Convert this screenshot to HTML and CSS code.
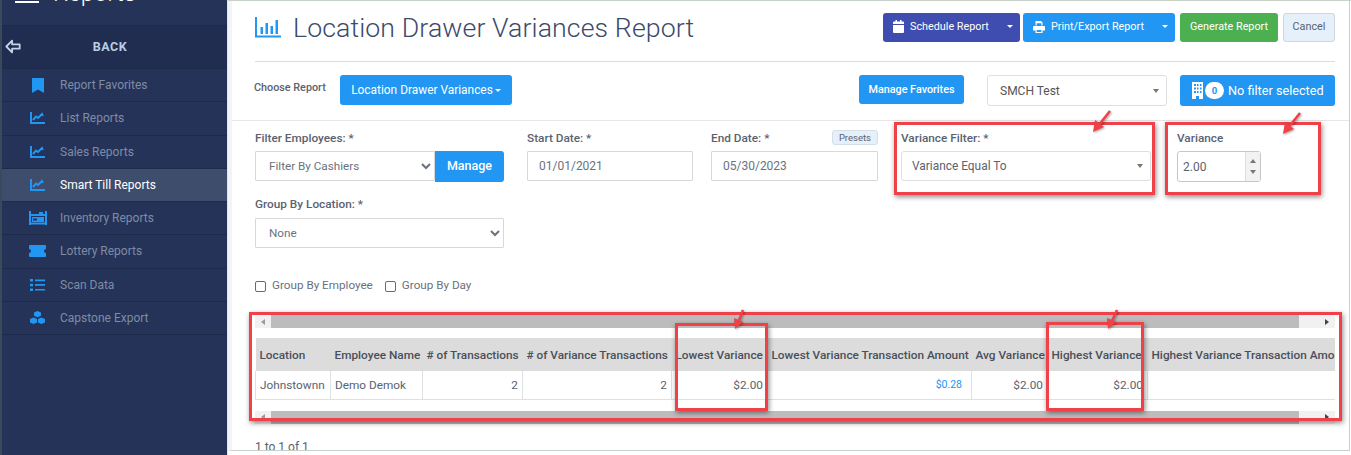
FILE: index.html
```html
<!DOCTYPE html>
<html lang="en">
<head>
<meta charset="utf-8">
<title>Location Drawer Variances Report</title>
<link rel="stylesheet" href="styles.css">
</head>
<body>
<div class="app">
  <aside class="sidebar">
    <div class="brand">
      <span class="brand-bar"></span>
      <span class="brand-text">Reports</span>
    </div>
    <div class="back">
      <svg class="back-icon" viewBox="0 0 18 16"><path d="M8 1.500 1.500 8 8 14.500V10.500h8.500v-5H8z" fill="none" stroke="#c5d3e6" stroke-width="2" stroke-linejoin="round"/></svg>
      <span>BACK</span>
    </div>
    <nav class="nav">
      <a class="nav-item"><span class="nav-icon"><svg width="12" height="15" viewBox="0 0 12 15"><path d="M0 0h12v15L6 11.500 0 15z" fill="#2196f3"/></svg></span>Report Favorites</a>
      <a class="nav-item"><span class="nav-icon"><svg width="15" height="12" viewBox="0 0 15 12"><path d="M1 0v11h14M3 8l3-3.500 2 1.500 4-4 .8 2" fill="none" stroke="#2196f3" stroke-width="2"/></svg></span>List Reports</a>
      <a class="nav-item"><span class="nav-icon"><svg width="15" height="12" viewBox="0 0 15 12"><path d="M1 0v11h14M3 8l3-3.500 2 1.500 4-4 .8 2" fill="none" stroke="#2196f3" stroke-width="2"/></svg></span>Sales Reports</a>
      <a class="nav-item is-active"><span class="nav-icon"><svg width="15" height="12" viewBox="0 0 15 12"><path d="M1 0v11h14M3 8l3-3.500 2 1.500 4-4 .8 2" fill="none" stroke="#2196f3" stroke-width="2"/></svg></span>Smart Till Reports</a>
      <a class="nav-item"><span class="nav-icon"><svg width="18" height="14" viewBox="0 0 18 14"><path d="M1 0v14M17 0v14M1 12.500h16M1 4h16" fill="none" stroke="#2196f3" stroke-width="2"/><rect x="3" y="6" width="12" height="5" fill="#2196f3"/><rect x="10" y="1" width="4" height="3" fill="#2196f3"/><rect x="4" y="7.500" width="4" height="2" fill="#253358"/></svg></span>Inventory Reports</a>
      <a class="nav-item"><span class="nav-icon"><svg width="17" height="12" viewBox="0 0 17 12"><path d="M1 0h15a1 1 0 0 1 1 1v3a2 2 0 0 0 0 4v3a1 1 0 0 1-1 1H1a1 1 0 0 1-1-1V8a2 2 0 0 0 0-4V1a1 1 0 0 1 1-1z" fill="#2196f3"/></svg></span>Lottery Reports</a>
      <a class="nav-item"><span class="nav-icon"><svg width="15" height="12" viewBox="0 0 15 12"><path d="M0 0h3v2.500H0zM0 4.700h3v2.500H0zM0 9.500h3V12H0zM5 .5h10v1.700H5zM5 5.100h10v1.700H5zM5 9.900h10v1.700H5z" fill="#2196f3"/></svg></span>Scan Data</a>
      <a class="nav-item"><span class="nav-icon"><svg width="15" height="13" viewBox="0 0 15 13"><path d="M7.500 0 11 1.500v3.300L7.500 6.300 4 4.800V1.500zM3.700 6.500l3.300 1.400v3.600L3.700 13 0 11.500V8zM11.300 6.500 15 8v3.500L11.300 13 8 11.500V7.900z" fill="#2196f3"/></svg></span>Capstone Export</a>
    </nav>
  </aside>

  <main class="main">
    <header class="title-row">
      <div class="title-wrap">
        <svg class="title-icon" width="26" height="21" viewBox="0 0 26 21"><path d="M1 0v19.500h25" fill="none" stroke="#2196f3" stroke-width="2"/><path d="M5.500 10H8v7H5.500zM10.500 6H13v11h-2.500zM15.500 9H18v8h-2.500zM20.500 3H23v14h-2.500z" fill="#2196f3"/></svg>
        <h1 class="title">Location Drawer Variances Report</h1>
      </div>
      <div class="actions">
        <div class="btn-split btn-indigo">
          <span class="split-main"><svg width="11" height="13" viewBox="0 0 11 13"><path d="M0 5h11v7a1 1 0 0 1-1 1H1a1 1 0 0 1-1-1zM1 1.500h1.500V0h1.500v1.500h3V0h1.500v1.500H10a1 1 0 0 1 1 1V4H0V2.500a1 1 0 0 1 1-1z" fill="#fff"/></svg>Schedule Report</span>
          <span class="caret"></span>
        </div>
        <div class="btn-split btn-blue btn-print">
          <span class="split-main"><svg width="12" height="12" viewBox="0 0 12 12"><path d="M2.500 0h5.500L9.500 1.500V4.500H8.300V2.300H3.700v2.200H2.500zM1 5h10a1 1 0 0 1 1 1v3.500H9.500V12h-7V9.500H0V6a1 1 0 0 1 1-1zm2.700 4v2h4.600V9z" fill="#fff"/></svg>Print/Export Report</span>
          <span class="caret"></span>
        </div>
        <button class="btn btn-green">Generate Report</button>
        <button class="btn btn-cancel">Cancel</button>
      </div>
    </header>

    <section class="choose-row">
      <span class="choose-label">Choose Report</span>
      <button class="btn btn-report">Location Drawer Variances<span class="caret caret-tight"></span></button>
      <span class="spacer"></span>
      <button class="btn btn-fav">Manage Favorites</button>
      <div class="fake-select store-select"><span>SMCH Test</span><span class="mini-caret"></span></div>
      <button class="btn btn-filter">
        <svg width="11" height="17" viewBox="0 0 11 17"><path d="M0 0h11v17H7v-3H4v3H0zM2 2v2h2V2zM5 2v2h1.500V2zM8 2v2h1.500V2zM2 5.500v2h2v-2zM5 5.500v2h1.500v-2zM8 5.500v2h1.500v-2zM2 9v2h2V9zM5 9v2h1.500V9zM8 9v2h1.500V9z" fill="#fff" fill-rule="evenodd"/></svg>
        <span class="count">0</span>No filter selected
      </button>
    </section>

    <section class="filters">
      <div class="field f-emp">
        <label class="field-label">Filter Employees: *</label>
        <div class="input-group">
          <select class="control select-native"><option>Filter By Cashiers</option></select>
          <button class="btn btn-manage">Manage</button>
        </div>
      </div>
      <div class="field f-start">
        <label class="field-label">Start Date: *</label>
        <input class="control date-input" value="01/01/2021">
      </div>
      <div class="field f-end">
        <label class="field-label">End Date: *<span class="presets">Presets</span></label>
        <input class="control date-input" value="05/30/2023">
      </div>
      <div class="field f-var">
        <label class="field-label">Variance Filter: *</label>
        <div class="fake-select var-select"><span>Variance Equal To</span><span class="mini-caret"></span></div>
      </div>
      <div class="field f-num">
        <label class="field-label">Variance</label>
        <div class="spin">
          <span class="spin-value">2.00</span>
          <span class="spin-btns"><i class="spin-up"></i><i class="spin-down"></i></span>
        </div>
      </div>
      <div class="field f-group">
        <label class="field-label">Group By Location: *</label>
        <select class="control select-native select-full"><option>None</option></select>
      </div>
    </section>

    <section class="checks">
      <label class="check"><span class="box"></span>Group By Employee</label>
      <label class="check"><span class="box"></span>Group By Day</label>
    </section>

    <section class="table-wrap">
      <div class="scrollbar"><span class="sb-end"><i class="arrow-l"></i></span><span class="sb-thumb"></span><span class="sb-end sb-right"><i class="arrow-r"></i></span></div>
      <div class="table-clip">
        <table class="report">
          <colgroup>
            <col class="c1"><col class="c2"><col class="c3"><col class="c4"><col class="c5"><col class="c6"><col class="c7"><col class="c8"><col class="c9">
          </colgroup>
          <thead>
            <tr><th>Location</th><th>Employee Name</th><th># of Transactions</th><th># of Variance Transactions</th><th>Lowest Variance</th><th>Lowest Variance Transaction Amount</th><th>Avg Variance</th><th>Highest Variance</th><th>Highest Variance Transaction Amount</th></tr>
          </thead>
          <tbody>
            <tr><td>Johnstownn</td><td>Demo Demok</td><td class="num">2</td><td class="num">2</td><td class="num">$2.00</td><td class="num link">$0.28</td><td class="num">$2.00</td><td class="num">$2.00</td><td class="num link">$9.72</td></tr>
          </tbody>
        </table>
      </div>
      <div class="scrollbar sb-bottom"><span class="sb-end"><i class="arrow-l"></i></span><span class="sb-thumb"></span><span class="sb-end sb-right"><i class="arrow-r"></i></span></div>
    </section>

    <div class="pager">1 to 1 of 1</div>

    <span class="mark m-var"></span>
    <span class="mark m-num"></span>
    <span class="mark m-table"></span>
    <span class="mark m-low"></span>
    <span class="mark m-high"></span>
    <svg class="arrows" width="1124" height="340" viewBox="0 0 1124 340">
      <g stroke="#f04048" stroke-width="2.500" fill="none">
        <path d="M878 110 866 125"/>
        <path d="M1068 112 1056 127"/>
        <path d="M511 309 506 322"/>
        <path d="M885 309 879 322"/>
      </g>
      <g fill="#f04048">
        <path d="M861 131 863 119 872 126z"/>
        <path d="M1051 133 1053 121 1062 128z"/>
        <path d="M503 328 502 317 511 321z"/>
        <path d="M876 328 875 317 884 321z"/>
      </g>
    </svg>
  </main>
</div>
</body>
</html>
```

FILE: styles.css
```css
* { box-sizing: border-box; }
html, body { margin: 0; height: 455px; overflow: hidden; background: #fff; }
body { font-family: Roboto, "Liberation Sans", sans-serif; font-size: 12px; color: #5a6270; }

.app { display: flex; height: 455px; border-top: 1px solid #c8d2c8; }

.sidebar { width: 228px; flex: none; background: #253358; border-left: 2px solid #3a4a5c; border-right: 1px solid #dfe3ee; margin-top: -1px; overflow: hidden; }
.brand { height: 26px; border-bottom: 1px solid #1e2a4a; display: flex; align-items: flex-end; position: relative; }
.brand-bar { width: 24px; height: 2px; background: #fff; margin: 0 14px 22px 13px; }
.brand-text { color: #fff; font-size: 24px; font-weight: 300; line-height: 24px; margin-bottom: 20px; }
.back { height: 43px; background: #212d50; border-bottom: 1px solid #1e2a4a; display: flex; align-items: center; justify-content: center; position: relative; padding: 0 9px 1px 0; color: #b9cde4; font-size: 12.500px; font-weight: 700; letter-spacing: .5px; }
.back-icon { position: absolute; left: 3px; top: 13px; width: 16px; height: 15px; }
.nav { display: flex; flex-direction: column; }
.nav-item { height: 33.250px; display: flex; align-items: center; color: #7f8ba6; font-size: 12px; border-bottom: 1px solid #1e2a4a; }
.nav-item.is-active { background: #3f4d6d; color: #fff; }
.nav-icon { width: 58px; flex: none; display: flex; justify-content: center; padding-left: 24px; padding-right: 11px; }

.main { flex: 1; height: 450px; background: #fff; border-left: 4px solid #f3f4fa; border-right: 1px solid #c8d2c8; border-bottom: 1px solid #c8d2c8; margin-right: 1px; padding: 0 14px 0 23px; position: relative; overflow: hidden; }

.title-row { height: 61px; border-bottom: 1px solid #dcdcdc; display: flex; align-items: flex-start; justify-content: space-between; }
.title-wrap { display: flex; align-items: center; height: 53px; }
.title-icon { flex: none; margin-right: 12px; }
.title { margin: 0; font-size: 26.700px; font-weight: 300; color: #3c4a6b; letter-spacing: .1px; }
.actions { display: flex; gap: 3px; padding-top: 12px; }
.btn { border: 0; border-radius: 3px; color: #fff; font-family: inherit; font-size: 11px; padding: 0; cursor: pointer; }
.btn-split { height: 29px; border-radius: 3px; color: #fff; font-size: 10.800px; display: flex; align-items: center; justify-content: space-between; padding: 0 7px 2px 10px; }
.btn-indigo { width: 137px; background: #3f4db0; }
.btn-blue { width: 152px; background: #2196f3; }
.btn-print { margin-right: 2px; }
.split-main { display: flex; align-items: center; gap: 6px; }
.caret { display: inline-block; border-left: 3px solid transparent; border-right: 3px solid transparent; border-top: 3px solid #fff; }
.caret-tight { margin-left: 2px; vertical-align: middle; }
.btn-green { width: 98px; height: 29px; padding-bottom: 2px; background: #4caf50; font-size: 10.800px; }
.btn-cancel { width: 52px; height: 29px; padding-bottom: 2px; margin-left: 2px; background: #e6f0fa; color: #5a6270; border: 1px solid #cfd6dc; font-size: 10.800px; }

.choose-row { height: 59px; border-bottom: 1px solid #e6e6e6; display: flex; align-items: flex-start; padding-top: 13px; margin-right: -14px; margin-left: -23px; padding-left: 22px; padding-right: 14px; }
.choose-label { width: 86px; color: #5a6270; font-size: 10.800px; font-weight: 500; padding-top: 6px; }
.btn-report { width: 172px; height: 30px; background: #2196f3; font-size: 11.900px; }
.spacer { flex: 1; }
.btn-fav { width: 105px; height: 29px; background: #2196f3; font-size: 10.800px; font-weight: 500; margin-right: 23px; }
.fake-select { background: #fff; border: 1px solid #dcdfe3; border-radius: 3px; display: flex; align-items: center; justify-content: space-between; color: #555; }
.store-select { width: 180px; height: 31px; padding: 0 7px 0 12px; font-size: 12px; margin-right: 13px; }
.mini-caret { border-left: 3.500px solid transparent; border-right: 3.500px solid transparent; border-top: 4px solid #777; }
.btn-filter { width: 155px; height: 31px; background: #2196f3; font-size: 12.700px; display: flex; align-items: center; padding-left: 12px; }
.count { width: 19px; height: 17px; border-radius: 9px; background: #fff; color: #2196f3; font-size: 9.500px; font-weight: 700; display: flex; align-items: center; justify-content: center; margin: 0 4px 0 2px; }

.filters { display: grid; grid-template-columns: 249px 166px 167px 250px 84px; column-gap: 23px; grid-template-rows: 66px 50px; padding-top: 10px; height: 141px; }
.filters .f-end { margin-left: -5px; width: 167px; }
.filters .f-var { margin-left: -5px; width: 250px; }
.filters .f-num { margin-left: -2px; width: 84px; }
.f-group { grid-column: 1; grid-row: 2; }
.field-label { display: flex; align-items: center; height: 14px; margin-bottom: 6px; font-size: 11.800px; font-weight: 500; color: #5a6270; position: relative; }
.presets { position: absolute; right: 0; top: -1px; height: 15px; padding: 0 6px; background: #e6f0fa; border: 1px solid #d5dfe9; border-radius: 3px; font-size: 9.500px; font-weight: 400; line-height: 13px; color: #5a6270; }
.control { height: 30px; border: 1px solid #d8d8d8; background: #fff; color: #6a7280; font-family: inherit; font-size: 12px; border-radius: 1px; }
.input-group { display: flex; }
.select-native { flex: 1; min-width: 0; padding-left: 9px; font-size: 11.700px; }
.select-full { width: 100%; margin-top: 1px; }
.btn-manage { width: 69px; height: 31px; padding-bottom: 2px; background: #2196f3; font-size: 12.500px; font-weight: 500; border-radius: 0 3px 3px 0; flex: none; }
.date-input { width: 100%; padding: 0 11px; }
.var-select { height: 30px; padding: 0 7px 0 10px; font-size: 11.900px; color: #5a6270; }
.spin { width: 84px; height: 31px; border: 1px solid #c6c6c6; border-radius: 3px; display: flex; align-items: center; justify-content: space-between; color: #5a6270; font-size: 12px; padding-left: 5px; }
.spin-btns { width: 15px; height: 29px; background: #f2f2f2; border-left: 1px solid #ddd; display: flex; flex-direction: column; align-items: center; justify-content: center; gap: 7px; }
.spin-up { border-left: 3.500px solid transparent; border-right: 3.500px solid transparent; border-bottom: 4px solid #777; }
.spin-down { border-left: 3.500px solid transparent; border-right: 3.500px solid transparent; border-top: 4px solid #777; }

.checks { display: flex; gap: 12px; height: 22px; margin-top: 12px; align-items: center; }
.check { display: flex; align-items: center; gap: 6px; font-size: 11.700px; color: #6a7280; }
.box { width: 11px; height: 11px; border: 1px solid #6a6a6a; border-radius: 2px; background: #fff; margin-top: 2px; }

.table-wrap { margin-top: 19px; width: 1080px; }
.scrollbar { height: 13px; display: flex; background: #f1f1f1; }
.sb-end { width: 16px; flex: none; display: flex; align-items: center; justify-content: center; }
.sb-right { width: 36px; justify-content: flex-end; padding-right: 6px; }
.sb-thumb { flex: 1; background: #bcbcbc; }
.arrow-l { border-top: 3.500px solid transparent; border-bottom: 3.500px solid transparent; border-right: 4px solid #9a9a9a; }
.arrow-r { border-top: 3.500px solid transparent; border-bottom: 3.500px solid transparent; border-left: 4px solid #444; }
.table-clip { overflow: hidden; margin-top: 10px; }
.sb-bottom { margin-top: 11px; }
.report { table-layout: fixed; border-collapse: collapse; width: 1290px; font-size: 11.800px; }
.c1 { width: 75px; } .c2 { width: 92px; } .c3 { width: 100px; } .c4 { width: 149px; } .c5 { width: 96px; } .c6 { width: 204px; } .c7 { width: 76px; } .c8 { width: 100px; } .c9 { width: 398px; }
.report th { height: 33px; background: #dcdcdc; color: #4a4f5a; font-weight: 500; text-align: left; padding: 0 4px; white-space: nowrap; overflow: hidden; }
.report td { height: 28px; border: 1px solid #e0e0e0; border-top: 0; color: #5a6270; padding: 0 4px; white-space: nowrap; }
.num { text-align: right; }
.report td.link { color: #2196f3; font-size: 10.500px; padding-right: 9px; }
.pager { margin-top: 16px; font-size: 12px; color: #5a6270; }

.mark { position: absolute; border: 3px solid #f04048; box-shadow: 1px 2px 5px rgba(0,0,0,.45); pointer-events: none; }
.m-var { left: 662px; top: 121px; width: 261px; height: 73px; }
.m-num { left: 933px; top: 121px; width: 156px; height: 73px; }
.m-table { left: 17px; top: 311px; width: 1093px; height: 109px; }
.m-low { left: 443px; top: 322px; width: 93px; height: 88px; }
.m-high { left: 814px; top: 321px; width: 98px; height: 89px; }
.arrows { position: absolute; left: 0; top: 0; pointer-events: none; filter: drop-shadow(1px 1px 1px rgba(0,0,0,.35)); }
```
